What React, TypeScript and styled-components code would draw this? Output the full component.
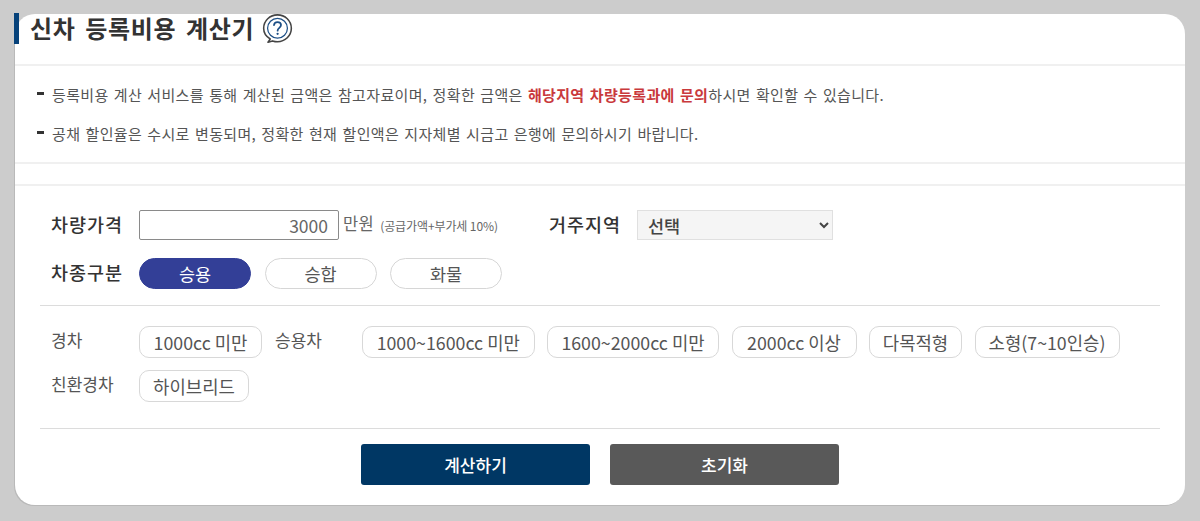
import React from "react";
import styled, { createGlobalStyle } from "styled-components";

const Global = createGlobalStyle`
  html, body { margin: 0; padding: 0; background: #cccccc; }
  body { font-family: "Noto Sans CJK KR", "Noto Sans", sans-serif; }
  * { box-sizing: border-box; }
`;

const Page = styled.div`
  width: 1200px;
  height: 521px;
  padding: 14px 15px 16px;
  overflow: hidden;
`;

const Panel = styled.div`
  width: 1170px;
  height: 491px;
  background: #fff;
  border-radius: 20px;
  display: flex;
  flex-direction: column;
  box-shadow: -1px 1px 0 #b9b9b9;
`;

const Header = styled.header`
  display: flex;
  align-items: flex-start;
  gap: 8px;
  margin-left: -1px;
  margin-top: -1px;
  height: 51px;
`;

const Title = styled.h1`
  margin: 0;
  height: 31px;
  border-left: 5px solid #06427a;
  padding-left: 11px;
  font-size: 24px;
  line-height: 29px;
  font-weight: 700;
  letter-spacing: 0.7px;
  word-spacing: 3.5px;
  color: #333;
`;

const HelpIcon = styled.svg`
  width: 31px;
  height: 31px;
  flex: none;
`;

const Notices = styled.ul`
  list-style: none;
  margin: 0;
  padding: 9px 0 0 22px;
  height: 100px;
  border-top: 2px solid #f0f0f0;
  border-bottom: 2px solid #f0f0f0;
`;

const Notice = styled.li`
  height: 39px;
  display: flex;
  align-items: center;
  gap: 8px;
  font-size: 15px;
  letter-spacing: 0.35px;
  word-spacing: 1.5px;
  color: #555;
`;

const Dash = styled.span`
  width: 7px;
  height: 3px;
  background: #333;
  margin-top: -3px;
  flex: none;
`;

const Strong = styled.b`
  color: #c9393c;
  font-weight: 700;
`;

const Form = styled.section`
  margin-top: 20px;
  flex: 1;
  border-top: 2px solid #f0f0f0;
  padding: 24px 25px 0;
  display: flex;
  flex-direction: column;
`;

const Row = styled.div<{ $gap?: number }>`
  display: flex;
  align-items: center;
  margin-bottom: ${(p) => p.$gap ?? 0}px;
  padding-left: 11px;
`;

const FieldLabel = styled.label<{ $left?: number }>`
  width: ${(p) => (p.$left ? "auto" : "88px")};
  margin-left: ${(p) => p.$left ?? 0}px;
  font-size: 18.5px;
  letter-spacing: 1px;
  font-weight: 500;
  color: #333;
  line-height: 29px;
  margin-top: -2px;
`;

const PriceInput = styled.input`
  width: 200px;
  height: 30px;
  border: 1px solid #8a8a8a;
  border-radius: 2px;
  padding: 1px 10px 0 0;
  text-align: right;
  font: 400 17.5px "Noto Sans CJK KR", sans-serif;
  color: #666;
  background: #fff;
`;

const Unit = styled.span`
  margin-left: 4px;
  font-size: 16.5px;
  letter-spacing: 0.4px;
  color: #666;
  margin-top: -4px;
`;

const Note = styled.span`
  margin-left: 6px;
  font-size: 12px;
  color: #666;
  letter-spacing: -0.1px;
`;

const RegionSelect = styled.select`
  margin-left: 16px;
  width: 196px;
  height: 30px;
  border: 1px solid #e0e0e0;
  background: #f5f5f5;
  padding-left: 6px;
  font: 500 17.5px "Noto Sans CJK KR", sans-serif;
  color: #444;
  border-radius: 0;
`;

const Pills = styled.div`
  display: flex;
  gap: 13.5px;
`;

const Pill = styled.button<{ $active?: boolean }>`
  width: 112px;
  height: 31px;
  border-radius: 16px;
  border: 1px solid ${(p) => (p.$active ? "#333f97" : "#d6d6d6")};
  background: ${(p) => (p.$active ? "#333f97" : "#fff")};
  color: ${(p) => (p.$active ? "#fff" : "#555")};
  font: 400 17.5px "Noto Sans CJK KR", sans-serif;
  padding: 0;
`;

const Divider = styled.hr`
  margin: 0;
  width: 100%;
  border: 0;
  border-top: 1px solid #dcdcdc;
  height: 0;
`;

const ClassRows = styled.div`
  padding: 20px 0 26px 11px;
  display: flex;
  flex-direction: column;
  gap: 12px;
`;

const ClassRow = styled.div`
  display: flex;
  align-items: flex-start;
`;

const ClassLabel = styled.span<{ $wide?: number; $left?: number }>`
  width: ${(p) => p.$wide ?? 88}px;
  margin-left: ${(p) => p.$left ?? 0}px;
  font-size: 17px;
  line-height: 30px;
  color: #555;
  margin-top: -1px;
`;

const Chips = styled.div`
  display: flex;
  gap: 12.5px;
`;

const Chip = styled.button<{ $w: number }>`
  width: ${(p) => p.$w}px;
  height: 32px;
  border: 1px solid #d8d8d8;
  border-radius: 10px;
  background: #fff;
  color: #555;
  font: 400 17.8px "Noto Sans CJK KR", sans-serif;
  padding: 0;
  white-space: nowrap;
`;

const Actions = styled.div`
  margin-top: 15px;
  display: flex;
  justify-content: center;
  gap: 20px;
`;

const ActionButton = styled.button<{ $bg: string }>`
  width: 229px;
  height: 41px;
  border: 0;
  border-radius: 3px;
  background: ${(p) => p.$bg};
  color: #fff;
  font: 500 17px "Noto Sans CJK KR", sans-serif;
`;

export default function App() {
  return (
    <Page>
      <Global />
      <Panel>
        <Header>
          <Title>신차 등록비용 계산기</Title>
          <HelpIcon viewBox="0 0 30 30" fill="none">
            <path d="M8 25.2C4.2 23 1.6 19.3 1.6 14.8 1.6 7.6 7.6 1.8 15 1.8s13.4 5.8 13.4 13-6 13-13.4 13c-1.7 0-3.3-.3-4.8-.8L5.8 28.3Z" stroke="#444" strokeWidth="1.5" strokeLinejoin="round" />
            <circle cx="15" cy="14.8" r="9.6" stroke="#1d4f86" strokeWidth="1.2" />
            <path d="M11.6 11.8c.2-2 1.6-3 3.4-3 2 0 3.4 1.2 3.4 2.9 0 2.7-3.3 2.7-3.3 5.4" stroke="#1d4f86" strokeWidth="1.7" strokeLinecap="round" />
            <circle cx="15.1" cy="20.1" r="1.1" fill="#1d4f86" />
          </HelpIcon>
        </Header>
        <Notices>
          <Notice>
            <Dash />
            <span>
              등록비용 계산 서비스를 통해 계산된 금액은 참고자료이며, 정확한 금액은 <Strong>해당지역 차량등록과에 문의</Strong>하시면 확인할 수 있습니다.
            </span>
          </Notice>
          <Notice>
            <Dash />
            <span>공채 할인율은 수시로 변동되며, 정확한 현재 할인액은 지자체별 시금고 은행에 문의하시기 바랍니다.</span>
          </Notice>
        </Notices>
        <Form>
          <Row $gap={18}>
            <FieldLabel>차량가격</FieldLabel>
            <PriceInput defaultValue="3000" />
            <Unit>만원</Unit>
            <Note>(공급가액+부가세 10%)</Note>
            <FieldLabel $left={51}>거주지역</FieldLabel>
            <RegionSelect defaultValue="선택">
              <option>선택</option>
            </RegionSelect>
          </Row>
          <Row $gap={16}>
            <FieldLabel>차종구분</FieldLabel>
            <Pills>
              <Pill $active>승용</Pill>
              <Pill>승합</Pill>
              <Pill>화물</Pill>
            </Pills>
          </Row>
          <Divider />
          <ClassRows>
            <ClassRow>
              <ClassLabel>경차</ClassLabel>
              <Chip $w={123}>1000cc 미만</Chip>
              <ClassLabel $wide={87} $left={13}>승용차</ClassLabel>
              <Chips>
                <Chip $w={172.5}>1000~1600cc 미만</Chip>
                <Chip $w={172}>1600~2000cc 미만</Chip>
                <Chip $w={125}>2000cc 이상</Chip>
                <Chip $w={93}>다목적형</Chip>
                <Chip $w={145}>소형(7~10인승)</Chip>
              </Chips>
            </ClassRow>
            <ClassRow>
              <ClassLabel>친환경차</ClassLabel>
              <Chip $w={110}>하이브리드</Chip>
            </ClassRow>
          </ClassRows>
          <Divider />
          <Actions>
            <ActionButton $bg="#003764">계산하기</ActionButton>
            <ActionButton $bg="#595959">초기화</ActionButton>
          </Actions>
        </Form>
      </Panel>
    </Page>
  );
}
